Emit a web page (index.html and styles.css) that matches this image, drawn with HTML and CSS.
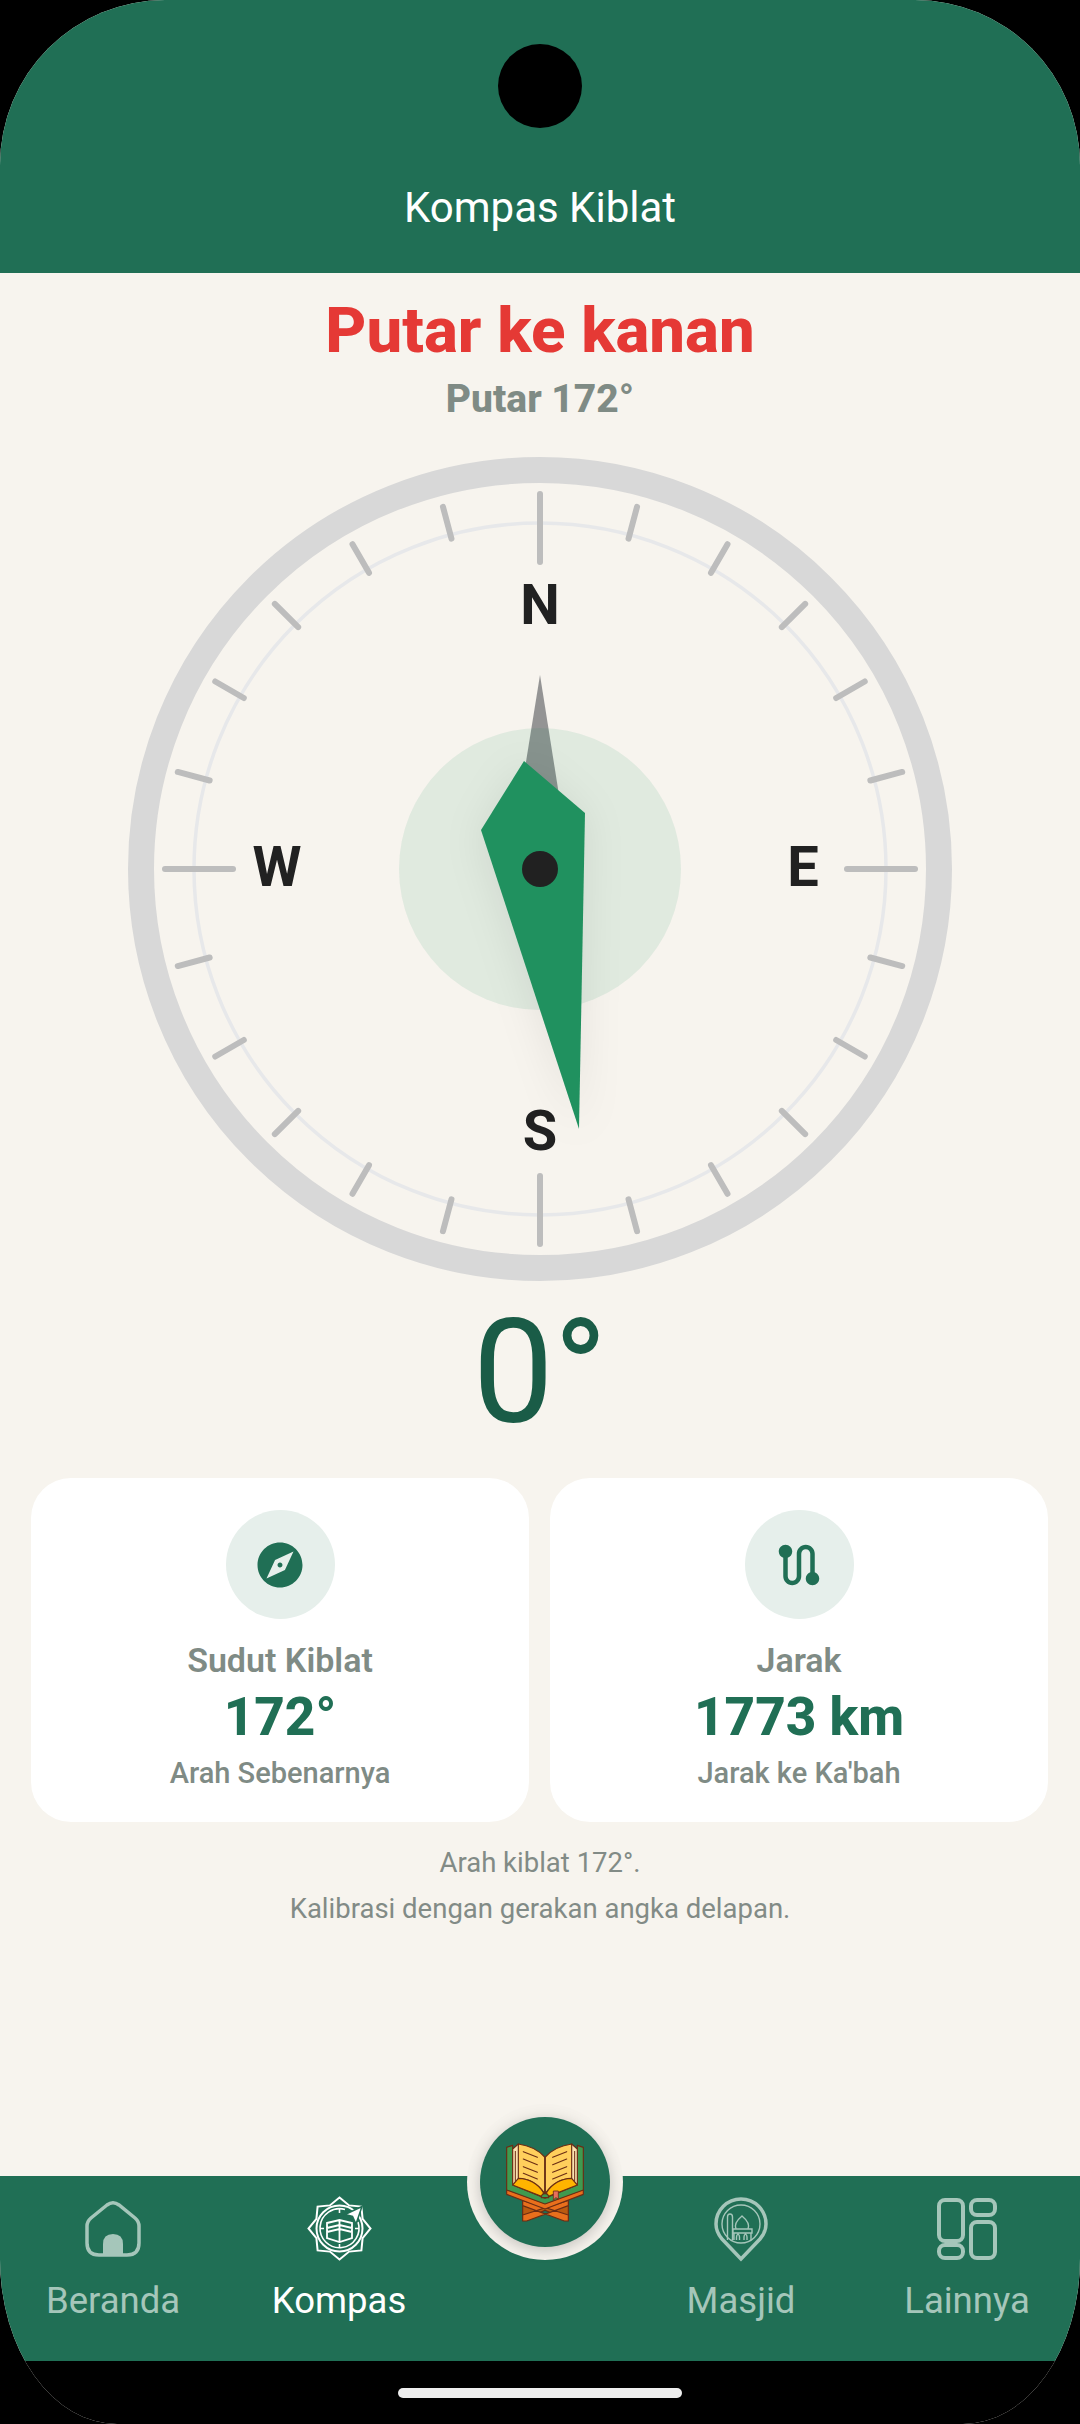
FILE: index.html
```html
<!DOCTYPE html>
<html lang="id">
<head>
    <meta charset="UTF-8">
    <meta name="viewport" content="width=device-width, initial-scale=1.0">
    <title>Kompas Kiblat</title>
    <link rel="stylesheet" href="styles.css">
</head>
<body>
    <div class="screen">
        <div class="topbar">
            <div class="camera"></div>
            <h1 class="topbar-title">Kompas Kiblat</h1>
        </div>

        <div class="content">
            <div class="turn-title">Putar ke kanan</div>
            <div class="turn-sub">Putar 172°</div>

            <svg class="compass" width="824" height="824" viewBox="128 457 824 824">
                <circle class="ring-outer" cx="540" cy="869" r="399"></circle>
                <circle class="ring-inner" cx="540" cy="869" r="346"></circle>
                <g id="ticks"></g>
                <text class="dir" x="540" y="624">N</text>
                <text class="dir" x="540" y="1150">S</text>
                <text class="dir" x="277" y="886">W</text>
                <text class="dir" x="803" y="886">E</text>
                <polygon class="needle-back" points="540,675 525,768 559,795"></polygon>
                <circle class="needle-disc" cx="540" cy="869" r="141"></circle>
                <polygon class="needle-main" points="524,761 585,813 579,1129 481,830"></polygon>
                <circle class="pivot" cx="540" cy="869" r="18"></circle>
            </svg>

            <div class="degree">0°</div>

            <div class="cards">
                <div class="card">
                    <div class="card-icon">
                        <svg width="54" height="54" viewBox="0 0 24 24"><path d="M12 10.9c-.61 0-1.1.49-1.1 1.1s.49 1.1 1.1 1.1c.61 0 1.1-.49 1.1-1.1s-.49-1.1-1.1-1.1zM12 2C6.48 2 2 6.48 2 12s4.48 10 10 10 10-4.48 10-10S17.52 2 12 2zm2.19 12.19L6 18l3.81-8.19L18 6l-3.81 8.19z"></path></svg>
                    </div>
                    <div class="card-label">Sudut Kiblat</div>
                    <div class="card-value">172°</div>
                    <div class="card-note">Arah Sebenarnya</div>
                </div>
                <div class="card">
                    <div class="card-icon">
                        <svg width="54" height="54" viewBox="0 0 24 24"><path d="M19,15.18V7c0-2.21-1.79-4-4-4s-4,1.79-4,4v10c0,1.1-0.9,2-2,2s-2-0.9-2-2V8.82C8.16,8.4,9,7.3,9,6c0-1.66-1.34-3-3-3S3,4.34,3,6c0,1.3,0.84,2.4,2,2.82V17c0,2.21,1.79,4,4,4s4-1.79,4-4V7c0-1.1,0.9-2,2-2s2,0.9,2,2v8.18c-1.16,0.41-2,1.51-2,2.82c0,1.66,1.34,3,3,3s3-1.34,3-3C21,16.7,20.16,15.6,19,15.18z"></path></svg>
                    </div>
                    <div class="card-label">Jarak</div>
                    <div class="card-value">1773 km</div>
                    <div class="card-note">Jarak ke Ka'bah</div>
                </div>
            </div>

            <p class="hint">Arah kiblat 172°.<br>Kalibrasi dengan gerakan angka delapan.</p>
        </div>

        <div class="navbar">
            <div class="nav-item">
                <svg class="nav-icon" width="56" height="66" viewBox="0 -5 56 66" fill="none" stroke="currentColor" stroke-width="3.5">
                    <path d="M22 4 6 17Q2 20.5 2 25V42Q2 54 14 54H42Q54 54 54 42V25Q54 20.5 50 17L34 4Q28 -0.5 22 4Z"></path>
                    <path class="fill" d="M18 54V43Q18 33 28 33T38 43V54Z"></path>
                </svg>
                <span>Beranda</span>
            </div>
            <div class="nav-item active">
                <svg class="nav-icon" width="66" height="66" viewBox="0 0 66 66" fill="none" stroke="currentColor" stroke-width="2">
                    <polygon points="33.5,1.5 43.1,9.4 55.4,10.6 56.6,22.9 64.5,32.5 56.6,42.1 55.4,54.4 43.1,55.6 33.5,63.5 23.9,55.6 11.6,54.4 10.4,42.1 2.5,32.5 10.4,22.9 11.6,10.6 23.9,9.4"></polygon>
                    <circle cx="33.5" cy="32.5" r="23"></circle>
                    <path stroke-width="1.6" d="M39 13.5A19.5 19.5 0 1 0 52 26"></path>
                    <path class="fill arrow" d="M56 10.5 39 18.5 46.5 20.5 50 28Z"></path>
                    <path stroke-width="1.6" d="M33.5 13V17M33.5 48V52M14 32.5H18M49 32.5H53"></path>
                    <path stroke-width="1.8" d="M21 27 33.5 24 46 27V42L33.5 46 21 42ZM33.5 24V46M21 32 33.5 29 46 32M21 36 33.5 33 46 36"></path>
                </svg>
                <span>Kompas</span>
            </div>
            <div></div>
            <div class="nav-item">
                <svg class="nav-icon" width="54" height="66" viewBox="0 -1 54 66" fill="none" stroke="currentColor" stroke-width="1.4">
                    <path stroke-width="3.5" d="M27 62 8 42Q2 35 2 27A25 25 0 0 1 52 27Q52 35 46 42Z"></path>
                    <circle cx="27" cy="27" r="19"></circle>
                    <path d="M13.5 43V20Q13.5 17 16 17T18.5 20V43M22 32Q19.5 26 28 19Q36.5 26 34 32ZM19 32H38V36H19ZM20 36V43M37 36V43M22.5 43V40Q22.5 38 24 37Q25.5 38 25.5 40V43M30 43V40Q30 38 31.5 37Q33 38 33 40V43"></path>
                </svg>
                <span>Masjid</span>
            </div>
            <div class="nav-item">
                <svg class="nav-icon" width="60" height="66" viewBox="0 -2 60 66" fill="none" stroke="currentColor" stroke-width="4">
                    <rect x="2" y="2" width="24" height="41" rx="6"></rect>
                    <rect x="34" y="2" width="24" height="15" rx="6"></rect>
                    <rect x="34" y="24" width="24" height="36" rx="6"></rect>
                    <rect x="2" y="47" width="24" height="13" rx="6"></rect>
                </svg>
                <span>Lainnya</span>
            </div>
        </div>

        <div class="fab-ring">
            <div class="fab">
                <svg width="90" height="95" viewBox="0 0 270 285" stroke="#6b2d14" stroke-width="3.5" stroke-linejoin="round">
                    <path fill="#bb5a10" d="M68 198H205V256L135 226 68 256Z"></path>
                    <path fill="#e96f1c" d="M68 240 205 196V212L80 258H68ZM205 240 68 196V212L193 258H205Z"></path>
                    <path fill="#e96f1c" d="M20 163V178L135 222 250 178V163L135 205Z"></path>
                    <path fill="#3f9a4f" d="M20 37 38 31V150L135 190 232 150V31L250 37V165L135 207 20 165Z"></path>
                    <path fill="#fbe3b0" d="M38 42 55 27 130 70V170L38 148ZM232 42 215 27 140 70V170L232 148Z"></path>
                    <path fill="none" stroke-width="3" d="M46 48V140M224 48V140"></path>
                    <path fill="#ffcf5c" d="M55 27Q105 34 134 66V176Q105 132 55 130ZM215 27Q165 34 136 66V176Q165 132 215 130Z"></path>
                    <path fill="#ffb400" d="M38 150 55 130Q105 132 130 172V186ZM232 150 215 130Q165 132 140 172V186Z"></path>
                    <path fill="#3f9a4f" d="M124 188Q124 176 135 176T146 188Z"></path>
                    <path fill="#e6705c" stroke-width="2.5" d="M160 168H175V192L167 188 160 196Z"></path>
                    <path fill="none" stroke-width="3.5" stroke-linecap="round" d="M70 50 112 67M70 72 112 89M70 95 112 112M70 115 112 132M200 50 158 67M200 72 158 89M200 95 158 112M200 115 158 132"></path>
                </svg>
            </div>
        </div>

        <div class="sysbar"><div class="home-pill"></div></div>
    </div>

    <script>
        // minor ticks every 15 degrees, the four main ones run longer inward
        var ticks = document.getElementById('ticks');
        for (var a = 0; a < 360; a += 15) {
            var inner = a % 90 === 0 ? 307 : 342;
            var rad = a * Math.PI / 180;
            var line = document.createElementNS('http://www.w3.org/2000/svg', 'line');
            line.setAttribute('x1', 540 + Math.sin(rad) * 375);
            line.setAttribute('y1', 869 - Math.cos(rad) * 375);
            line.setAttribute('x2', 540 + Math.sin(rad) * inner);
            line.setAttribute('y2', 869 - Math.cos(rad) * inner);
            line.setAttribute('class', 'tick');
            ticks.appendChild(line);
        }
    </script>
</body>
</html>
```

FILE: styles.css
```css
html, body {
    margin: 0;
    padding: 0;
    background-color: #000;
}

body {
    font-family: Roboto, "Liberation Sans", sans-serif;
    width: 1080px;
    height: 2424px;
    overflow: hidden;
}

.screen {
    position: relative;
    display: flex;
    flex-direction: column;
    height: 2424px;
    background-color: #f7f4ee;
    border-radius: 165px 165px 117px 117px / 165px;
    overflow: hidden;
}

.topbar {
    height: 273px;
    box-sizing: border-box;
    background-color: #206f55;
    display: flex;
    flex-direction: column;
    align-items: center;
    padding-top: 44px;
}

.camera {
    width: 84px;
    height: 84px;
    border-radius: 50%;
    background-color: #000;
}

.topbar-title {
    margin: 55px 0 0;
    font-size: 42px;
    line-height: 50px;
    font-weight: 400;
    color: #fff;
}

.content {
    flex: 1;
    display: flex;
    flex-direction: column;
    align-items: center;
}

.turn-title {
    margin-top: 20px;
    font-size: 63.5px;
    line-height: 75px;
    font-weight: 800;
    color: #e53935;
}

.turn-sub {
    margin-top: 9px;
    font-size: 39px;
    line-height: 45px;
    font-weight: 800;
    color: #7f8b85;
}

.compass {
    display: block;
    margin-top: 35px;
}

.ring-outer {
    fill: none;
    stroke: #d8d8d8;
    stroke-width: 26;
}

.ring-inner {
    fill: none;
    stroke: #e7e8ea;
    stroke-width: 3.5;
}

.tick {
    stroke: #bdbdbd;
    stroke-width: 6;
    stroke-linecap: round;
}

.dir {
    font-size: 56px;
    font-weight: 700;
    fill: #212121;
    text-anchor: middle;
}

.needle-back {
    fill: #949494;
}

.needle-disc {
    fill: #20915f;
    fill-opacity: 0.1;
}

.needle-main {
    fill: #20915f;
    filter: drop-shadow(0 6px 20px rgba(0, 0, 0, 0.08));
}

.pivot {
    fill: #212121;
}

.degree {
    margin-top: 7px;
    font-size: 144px;
    line-height: 169px;
    font-weight: 400;
    color: #1a5c47;
}

.cards {
    display: flex;
    gap: 21px;
    margin-top: 21px;
    align-self: flex-start;
    margin-left: 31px;
}

.card {
    width: 498px;
    height: 344px;
    box-sizing: border-box;
    padding-top: 32px;
    background-color: #fff;
    border-radius: 40px;
    display: flex;
    flex-direction: column;
    align-items: center;
}

.card-icon {
    width: 109px;
    height: 109px;
    border-radius: 50%;
    background-color: #e6efeb;
    display: flex;
    align-items: center;
    justify-content: center;
    margin-bottom: 22px;
}

.card-icon svg {
    fill: #206f55;
}

.card-label {
    font-size: 34px;
    line-height: 39px;
    font-weight: 600;
    color: #7f8b85;
}

.card-value {
    margin-top: 7px;
    font-size: 53px;
    line-height: 61px;
    font-weight: 800;
    color: #206f55;
}

.card-note {
    margin-top: 8px;
    font-size: 29px;
    line-height: 34px;
    font-weight: 500;
    color: #7f8b85;
}

.hint {
    margin: 18px 0 0;
    font-size: 27.5px;
    line-height: 46px;
    text-align: center;
    color: #828b86;
}

.navbar {
    height: 185px;
    box-sizing: border-box;
    background-color: #206f55;
    display: grid;
    grid-template-columns: 226px 226px 176px 226px 226px;
    padding-top: 20px;
}

.nav-item {
    height: 128px;
    display: flex;
    flex-direction: column;
    align-items: center;
    color: #a5c6ba;
    font-size: 36.5px;
    line-height: 42px;
}

.nav-item.active {
    color: #fff;
}

.nav-icon {
    margin-bottom: 18px;
}

.nav-icon .fill {
    fill: currentColor;
    stroke: none;
}

.nav-icon .arrow {
    stroke: #206f55;
    stroke-width: 1.5;
}

/* sits over the navbar, notch colour is the page colour */
.fab-ring {
    position: absolute;
    left: 467px;
    top: 2104px;
    width: 156px;
    height: 156px;
    border-radius: 50%;
    background-color: #f5f2ec;
    display: flex;
    align-items: center;
    justify-content: center;
}

.fab {
    width: 130px;
    height: 130px;
    border-radius: 50%;
    background-color: #206f55;
    box-shadow: 0 3px 14px rgba(0, 0, 0, 0.2);
    display: flex;
    align-items: center;
    justify-content: center;
}

.sysbar {
    height: 63px;
    background-color: #000;
    display: flex;
    align-items: center;
    justify-content: center;
}

.home-pill {
    width: 284px;
    height: 10px;
    border-radius: 5px;
    background-color: #eee;
}
```
